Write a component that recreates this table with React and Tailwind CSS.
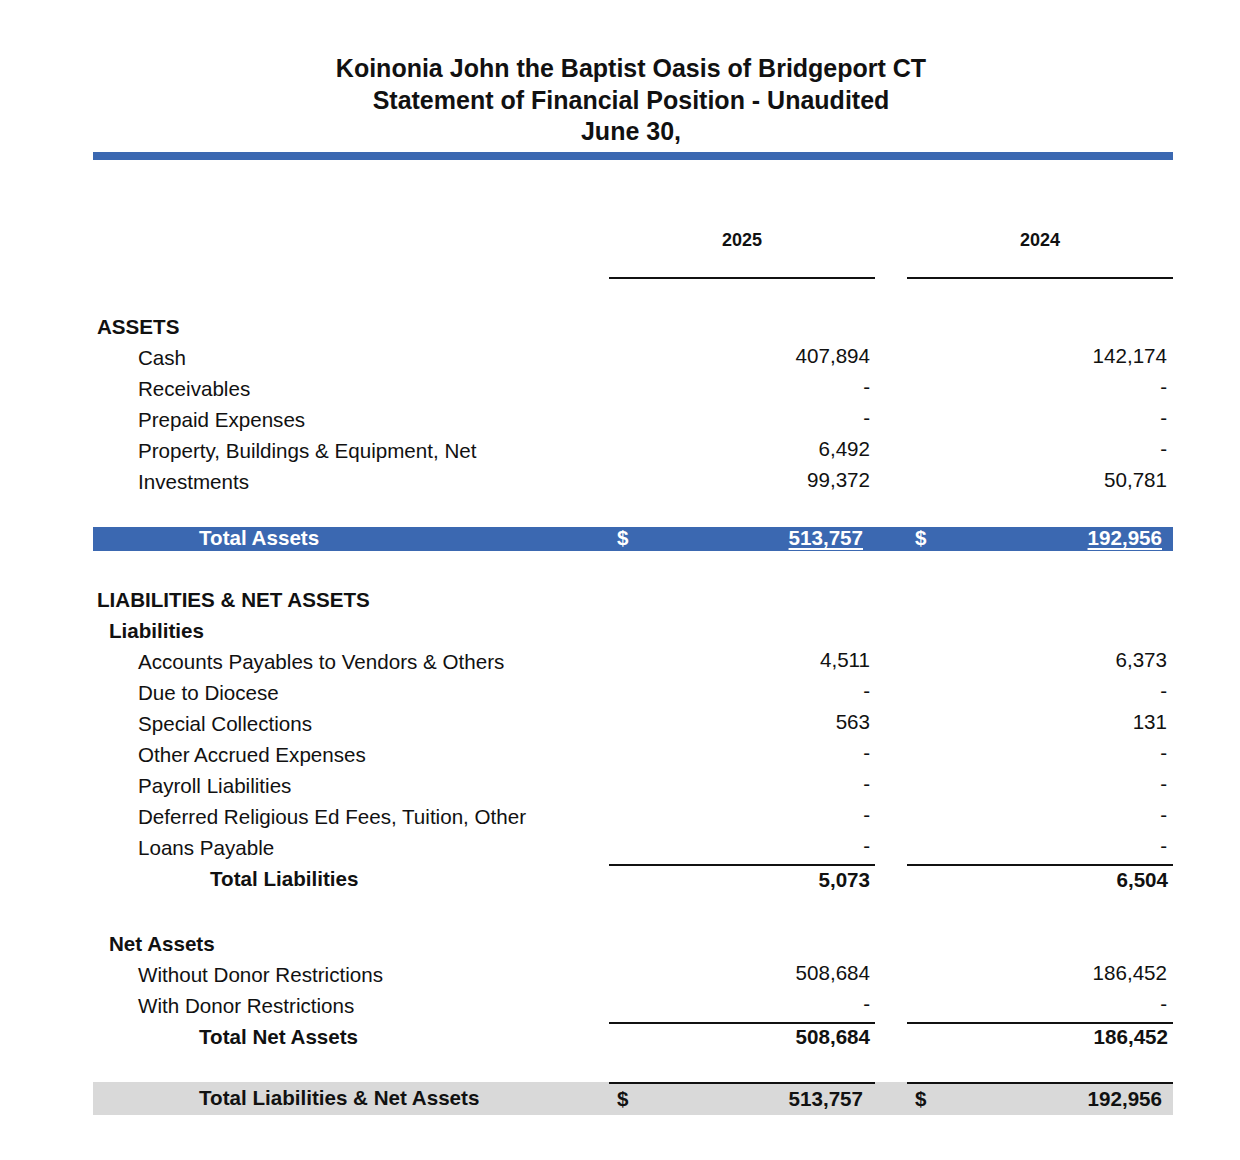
import React from "react";

const assets = [
  ["Cash", "407,894", "142,174"],
  ["Receivables", "-", "-"],
  ["Prepaid Expenses", "-", "-"],
  ["Property, Buildings & Equipment, Net", "6,492", "-"],
  ["Investments", "99,372", "50,781"],
];

const liabilities = [
  ["Accounts Payables to Vendors & Others", "4,511", "6,373"],
  ["Due to Diocese", "-", "-"],
  ["Special Collections", "563", "131"],
  ["Other Accrued Expenses", "-", "-"],
  ["Payroll Liabilities", "-", "-"],
  ["Deferred Religious Ed Fees, Tuition, Other", "-", "-"],
  ["Loans Payable", "-", "-"],
];

const netAssets = [
  ["Without Donor Restrictions", "508,684", "186,452"],
  ["With Donor Restrictions", "-", "-"],
];

const Value = ({ v, second }) => {
  const pad = second ? "pr-[6px]" : "pr-[5px]";
  return (
    <div className={`w-[266px] h-[31px] flex items-center justify-end pb-[5px] ${pad}`}>
      {v}
    </div>
  );
};

const Heading = ({ children, indent }) => (
  <div className={`h-[31px] leading-[30px] font-bold ${indent}`}>{children}</div>
);

const Line = ({ label, v1, v2 }) => (
  <div className="flex h-[31px]">
    <div className="w-[516px] pl-[45px] leading-[30px]">{label}</div>
    <Value v={v1} />
    <div className="w-[32px]" />
    <Value v={v2} second />
  </div>
);

const SubTotal = ({ label, indent, v1, v2, h }) => (
  <div className="flex font-bold">
    <div className={`w-[516px] ${indent} flex items-center pb-[2px]`}>{label}</div>
    <div className={`w-[266px] ${h} border-t-2 border-[#111] flex items-center justify-end pr-[5px] pb-[2px]`}>
      {v1}
    </div>
    <div className="w-[32px]" />
    <div className={`w-[266px] ${h} border-t-2 border-[#111] flex items-center justify-end pr-[5px] pb-[2px]`}>
      {v2}
    </div>
  </div>
);

export default function App() {
  return (
    <div className="min-h-[1160px] bg-white text-[#111] font-['Liberation_Sans',Arial,sans-serif] text-[20.6px]">
      <div className="ml-[93px] w-[1080px] pt-[53px]">
        <div className="text-center text-[25px] font-bold leading-[31.5px] pr-[4px]">
          <div>Koinonia John the Baptist Oasis of Bridgeport CT</div>
          <div>Statement of Financial Position - Unaudited</div>
          <div>June 30,</div>
        </div>
        <div className="mt-[4px] h-[8px] bg-[#3b68b1]" />

        <div className="flex mt-[65px]">
          <div className="w-[516px]" />
          <div className="w-[266px] h-[54px] border-b-2 border-[#111] text-center text-[18px] font-bold leading-[31px]">
            2025
          </div>
          <div className="w-[32px]" />
          <div className="w-[266px] h-[54px] border-b-2 border-[#111] text-center text-[18px] font-bold leading-[31px]">
            2024
          </div>
        </div>

        <div className="mt-[33.5px]">
          <Heading indent="pl-[4px]">ASSETS</Heading>
          {assets.map(([l, a, b]) => (
            <Line key={l} label={l} v1={a} v2={b} />
          ))}
        </div>

        <div className="mt-[28.5px] h-[24px] flex items-center bg-[#3b68b1] text-white font-bold">
          <div className="w-[516px] pl-[106px]">Total Assets</div>
          <div className="w-[266px] flex justify-between pl-[8px] pr-[12px]">
            <span>$</span>
            <span className="underline underline-offset-[3px]">513,757</span>
          </div>
          <div className="w-[32px]" />
          <div className="w-[266px] flex justify-between pl-[8px] pr-[11px]">
            <span>$</span>
            <span className="underline underline-offset-[3px]">192,956</span>
          </div>
        </div>

        <div className="mt-[34.5px]">
          <Heading indent="pl-[4px]">LIABILITIES &amp; NET ASSETS</Heading>
          <Heading indent="pl-[16px]">Liabilities</Heading>
          {liabilities.map(([l, a, b]) => (
            <Line key={l} label={l} v1={a} v2={b} />
          ))}
          <SubTotal label="Total Liabilities" indent="pl-[117px]" v1="5,073" v2="6,504" h="h-[33px]" />
        </div>

        <div className="mt-[32px]">
          <Heading indent="pl-[16px]">Net Assets</Heading>
          {netAssets.map(([l, a, b]) => (
            <Line key={l} label={l} v1={a} v2={b} />
          ))}
          <SubTotal label="Total Net Assets" indent="pl-[106px]" v1="508,684" v2="186,452" h="h-[31px]" />
        </div>

        <div className="mt-[27.5px] h-[33px] flex bg-[#d9d9d9] font-bold">
          <div className="w-[516px] pl-[106px] flex items-center">Total Liabilities &amp; Net Assets</div>
          <div className="w-[266px] border-t-2 border-[#111] flex items-center justify-between pl-[8px] pr-[12px]">
            <span>$</span>
            <span>513,757</span>
          </div>
          <div className="w-[32px]" />
          <div className="w-[266px] border-t-2 border-[#111] flex items-center justify-between pl-[8px] pr-[11px]">
            <span>$</span>
            <span>192,956</span>
          </div>
        </div>
      </div>
    </div>
  );
}
